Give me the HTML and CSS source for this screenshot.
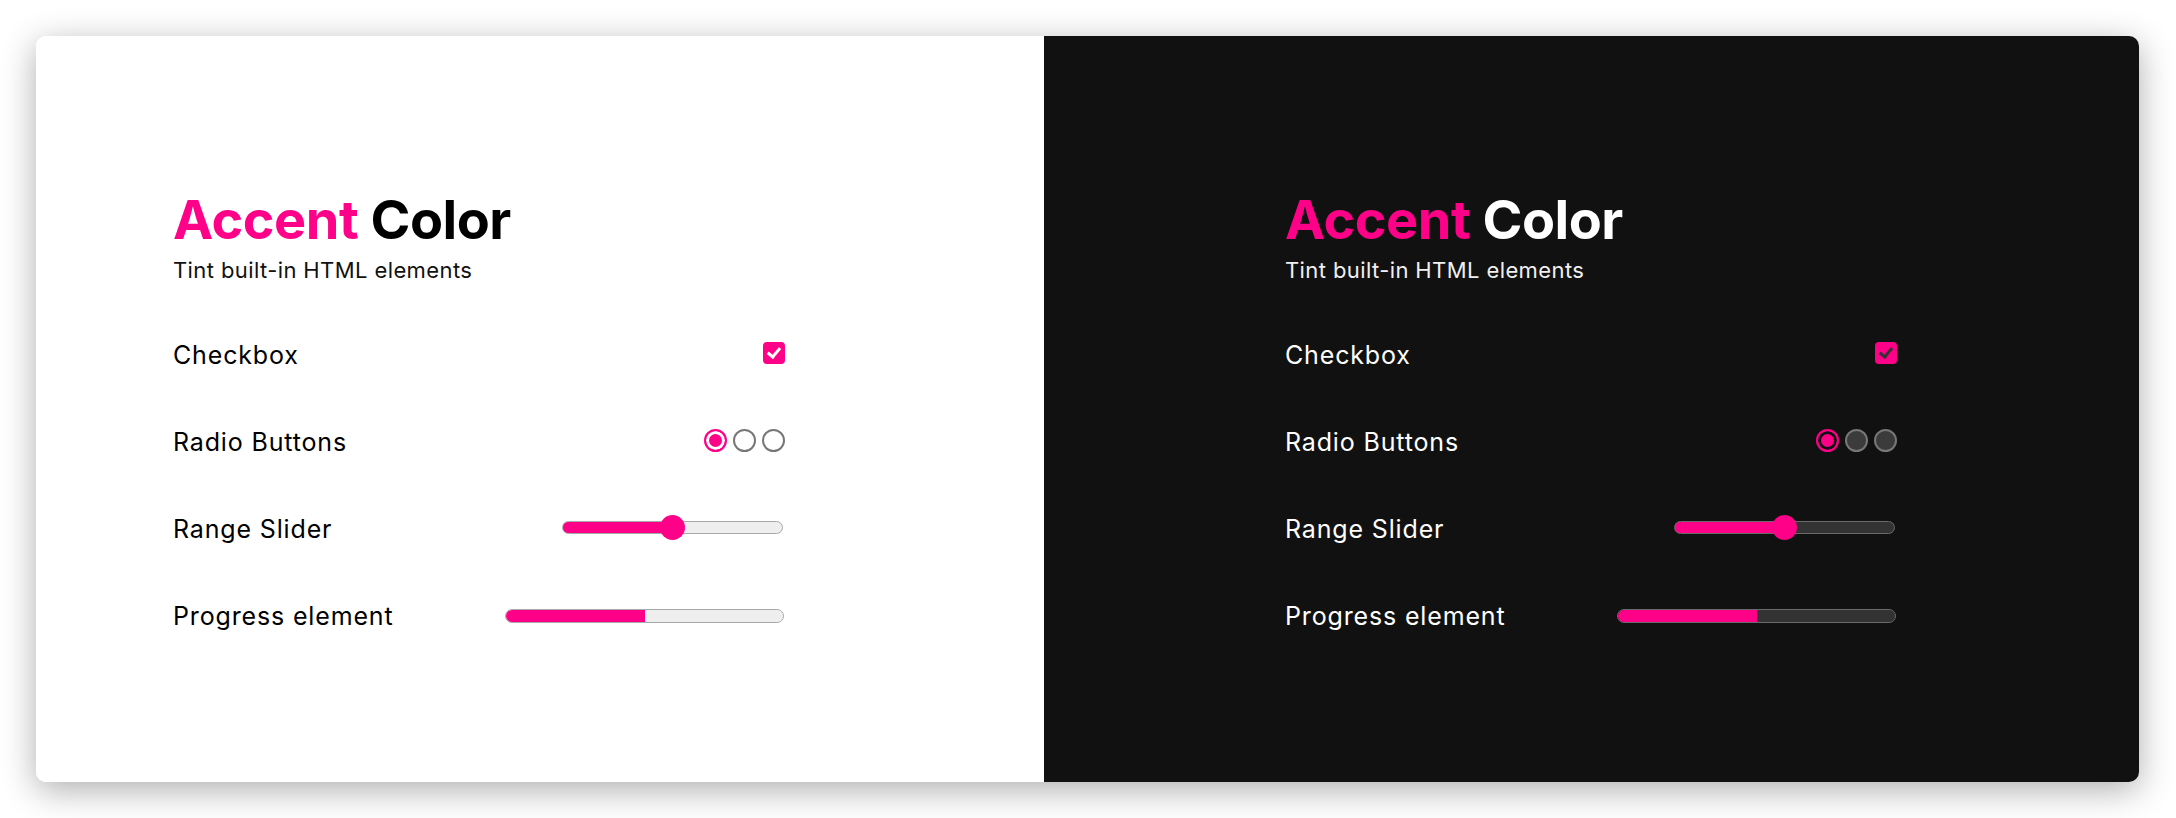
FILE: index.html
```html
<!DOCTYPE html>
<html lang="en">
<head>
    <meta charset="UTF-8">
    <meta name="viewport" content="width=device-width, initial-scale=1.0">
    <title>Accent Color</title>
    <link rel="stylesheet" href="styles.css">
</head>
<body>

    <div class="frame">
        <section class="panel light">
            <div class="content">
                <h1 class="title"><span class="accent">Accent</span> Color</h1>
                <p class="subtitle">Tint built-in HTML elements</p>
                <div class="rows">
                    <div class="row">
                        <label class="label" for="check-light">Checkbox</label>
                        <input type="checkbox" class="checkbox" id="check-light" checked>
                    </div>
                    <div class="row">
                        <span class="label">Radio Buttons</span>
                        <div class="radios">
                            <input type="radio" class="radio" name="radio-light" checked>
                            <input type="radio" class="radio" name="radio-light">
                            <input type="radio" class="radio" name="radio-light">
                        </div>
                    </div>
                    <div class="row">
                        <label class="label" for="range-light">Range Slider</label>
                        <input type="range" class="slider" id="range-light" min="0" max="100" value="50">
                    </div>
                    <div class="row">
                        <label class="label" for="progress-light">Progress element</label>
                        <progress class="progress" id="progress-light" max="100" value="50"></progress>
                    </div>
                </div>
            </div>
        </section>

        <section class="panel dark">
            <div class="content">
                <h1 class="title"><span class="accent">Accent</span> Color</h1>
                <p class="subtitle">Tint built-in HTML elements</p>
                <div class="rows">
                    <div class="row">
                        <label class="label" for="check-dark">Checkbox</label>
                        <input type="checkbox" class="checkbox" id="check-dark" checked>
                    </div>
                    <div class="row">
                        <span class="label">Radio Buttons</span>
                        <div class="radios">
                            <input type="radio" class="radio" name="radio-dark" checked>
                            <input type="radio" class="radio" name="radio-dark">
                            <input type="radio" class="radio" name="radio-dark">
                        </div>
                    </div>
                    <div class="row">
                        <label class="label" for="range-dark">Range Slider</label>
                        <input type="range" class="slider" id="range-dark" min="0" max="100" value="50">
                    </div>
                    <div class="row">
                        <label class="label" for="progress-dark">Progress element</label>
                        <progress class="progress" id="progress-dark" max="100" value="50"></progress>
                    </div>
                </div>
            </div>
        </section>
    </div>

</body>
</html>
```

FILE: styles.css
```css
body {
    margin: 0;
    height: 100vh;
    padding: 36px 37px 36px 36px;
    box-sizing: border-box;
    background-color: #fff;
    font-family: Inter, "Noto Sans", sans-serif;
}
.frame {
    display: grid;
    grid-template-columns: 1008px 1fr;
    height: 100%;
    border-radius: 10px;
    overflow: hidden;
    box-shadow: 0 8px 34px rgba(0, 0, 0, 0.32);
}
.panel {
    --accent: #ff0088;
    accent-color: var(--accent);
    padding-top: 157px;
}
.panel.light {
    --text: #000;
    --sub: #111;
    --muted: #eeeeee;
    --edge: #a9a9a9;
    --radio-fill: #fff;
    --radio-edge: #777;
    --gap: #fff;
    --tick: #fff;
    background-color: #fff;
    padding-left: 137px;
}
.panel.dark {
    --text: #fff;
    --sub: #f0f0f0;
    --muted: #333333;
    --edge: #6a6a6a;
    --radio-fill: #3b3b3b;
    --radio-edge: #777;
    --gap: #111;
    --tick: #333;
    background-color: #111111;
    padding-left: 241px;
}
.content {
    width: 612px;
    color: var(--text);
}
.title {
    margin: 0;
    font-size: 54px;
    line-height: 54px;
    font-weight: 700;
    letter-spacing: -0.5px;
}
.accent {
    color: var(--accent);
}
.subtitle {
    margin: 9px 0 0;
    font-size: 22px;
    line-height: 28px;
    letter-spacing: 0.4px;
    color: var(--sub);
}
.rows {
    margin-top: 27px;
}
.row {
    display: flex;
    justify-content: space-between;
    align-items: center;
    height: 87px;
}
.label {
    font-size: 25px;
    line-height: 30px;
    letter-spacing: 0.85px;
}

/* checkbox */
.checkbox {
    appearance: none;
    position: relative;
    width: 22px;
    height: 22px;
    margin: 0 0 3px;
    border-radius: 4px;
    background-color: var(--accent);
}
.checkbox::after {
    content: "";
    position: absolute;
    left: 7px;
    top: 3px;
    width: 5px;
    height: 10px;
    border-right: 3px solid var(--tick);
    border-bottom: 3px solid var(--tick);
    transform: rotate(40deg);
}

/* radios */
.radios {
    display: flex;
    gap: 6px;
    margin-bottom: 3px;
}
.radio {
    appearance: none;
    width: 23px;
    height: 23px;
    margin: 0;
    border-radius: 50%;
    box-sizing: border-box;
    border: 2px solid var(--radio-edge);
    background-color: var(--radio-fill);
}
.radio:checked {
    border: 2px solid var(--accent);
    background-color: var(--accent);
    box-shadow: inset 0 0 0 3px var(--gap);
}

/* range slider */
.slider {
    appearance: none;
    width: 221px;
    height: 25px;
    margin: 0 2px 2px 0;
    background: transparent;
}
.slider::-webkit-slider-runnable-track {
    box-sizing: border-box;
    height: 13px;
    border: 1px solid var(--edge);
    border-radius: 7px;
    background: linear-gradient(to right, var(--accent) 50%, var(--muted) 50%);
}
.slider::-webkit-slider-thumb {
    appearance: none;
    width: 25px;
    height: 25px;
    margin-top: -7px;
    border-radius: 50%;
    background-color: var(--accent);
}

/* progress */
.progress {
    appearance: none;
    box-sizing: border-box;
    width: 279px;
    height: 14px;
    margin: 0 1px 0 0;
    border: 1px solid var(--edge);
    border-radius: 7px;
    overflow: hidden;
    background-color: var(--muted);
}
.progress::-webkit-progress-bar {
    background-color: var(--muted);
    border-radius: 7px;
}
.progress::-webkit-progress-value {
    background-color: var(--accent);
}
```
